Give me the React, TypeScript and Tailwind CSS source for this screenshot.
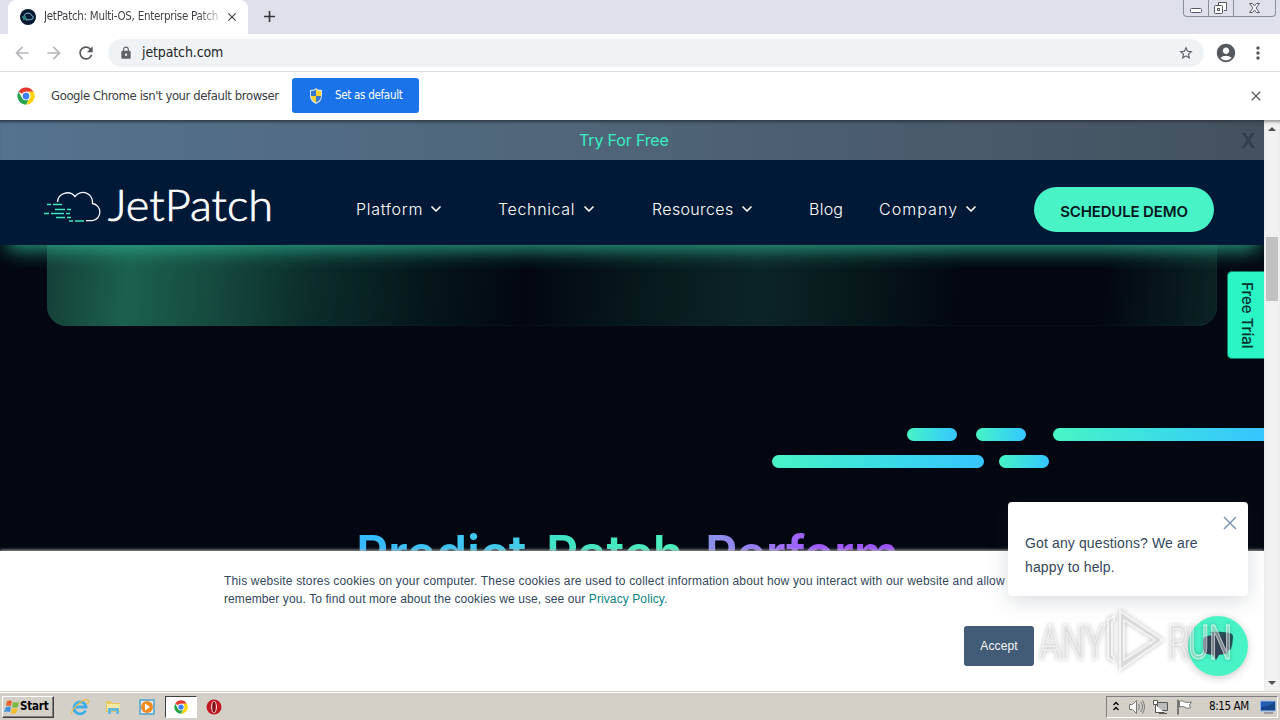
import {
  MdAccountCircle,
  MdAdd,
  MdArrowBack,
  MdArrowForward,
  MdClose,
  MdLock,
  MdMoreVert,
  MdRefresh,
  MdStarBorder,
} from "react-icons/md";
import { ChevronDown } from "lucide-react";

const ChromeLogo = ({ className }: { className?: string }) => (
  <svg viewBox="0 0 48 48" className={className}>
    <circle cx="24" cy="24" r="23" fill="#fff" />
    <path d="M24 1a23 23 0 0 1 19.900 11.500H24a11.500 11.500 0 0 0-10 5.800L4.100 12.500A23 23 0 0 1 24 1z" fill="#e33b2e" />
    <path d="M44 12.500A23 23 0 0 1 24 47l10-17.200a11.500 11.500 0 0 0 0-11.600l-3-5.700z" fill="#fcd209" />
    <path d="M4.100 12.500 14 29.800A11.500 11.500 0 0 0 24 35.500c3 0 5-1 7-2L24 47A23 23 0 0 1 4.100 12.500z" fill="#27a34b" />
    <circle cx="24" cy="24" r="11.500" fill="#fff" />
    <circle cx="24" cy="24" r="9" fill="#3d7ff0" />
  </svg>
);

function TabStrip() {
  return (
    <div className="flex h-[34px] shrink-0 justify-between bg-[#dee1e9]">
      <div className="flex">
        <div className="ml-2 flex h-[34px] w-60 items-center rounded-t-lg bg-white pl-3">
          <svg viewBox="0 0 16 16" className="size-4 shrink-0">
            <circle cx="8" cy="8" r="8" fill="#061b33" />
            <path d="M2 8h4M3 10h4" stroke="#45e0bd" />
            <path d="M4 7q1-3 4-3 3 0 3.500 2.500Q14 7 13 9.500 12 11 6 11" fill="none" stroke="#7fb6cc" />
          </svg>
          <div className="ml-2 w-[175px] whitespace-nowrap bg-linear-to-r from-[#3a3d42] from-88% to-[#3a3d4240] bg-clip-text font-['DejaVu_Sans_Condensed','DejaVu_Sans',sans-serif] text-[11.5px] tracking-[-0.280px] text-transparent">
            JetPatch: Multi-OS, Enterprise Patch
          </div>
          <MdClose className="ml-[6px] size-[14px] shrink-0 text-[#3c4043]" />
        </div>
        <MdAdd className="ml-3 mt-[7px] size-[19px] text-[#33363b]" />
      </div>
      <div className="mr-1 flex h-[17px] w-[93px] rounded-b-[4px] border border-t-0 border-[#8b8f98] text-[#555a66]">
        <svg viewBox="0 0 91 16" className="h-4 w-[91px]" fill="none" stroke="currentColor">
          <path d="M24.500 0v16M49.500 0v16" stroke="#8b8f98" />
          <rect x="6.500" y="8.500" width="11" height="4" rx="1" fill="#fff" />
          <path d="M34.500 5V2.500h8v8H40" fill="#fff" />
          <rect x="30.500" y="5.500" width="8" height="8" rx="1" fill="#fff" />
          <rect x="33.500" y="8.500" width="2" height="2" />
          <path d="M65.500 3.500h3l2 2.500 2-2.500h3L72 8l3.500 4.500h-3l-2-2.500-2 2.500h-3L69 8z" fill="#fff" />
        </svg>
      </div>
    </div>
  );
}

function Toolbar() {
  return (
    <div className="flex h-[38px] shrink-0 items-center border-b border-[#dcdde0] bg-white">
      <MdArrowBack className="ml-3 size-5 text-[#b4b6b9]" />
      <MdArrowForward className="ml-3 size-5 text-[#b4b6b9]" />
      <MdRefresh className="ml-3 size-5 text-[#55585c]" />
      <div className="ml-3 flex h-7 w-[1096px] items-center rounded-full bg-[#f0f3f6]">
        <MdLock className="ml-[11px] size-[14px] text-[#5f6368]" />
        <span className="ml-[9px] font-['DejaVu_Sans_Condensed','DejaVu_Sans',sans-serif] text-[14px] tracking-[-0.120px] text-[#222427]">
          jetpatch.com
        </span>
        <MdStarBorder className="ml-auto mr-[10px] size-4 text-[#55585c]" />
      </div>
      <MdAccountCircle className="ml-[11px] size-[22px] text-[#55585c]" />
      <MdMoreVert className="ml-[11px] size-5 text-[#55585c]" />
    </div>
  );
}

function DefaultBrowserBar() {
  return (
    <div className="flex h-12 shrink-0 items-center bg-white pb-px font-['DejaVu_Sans_Condensed','DejaVu_Sans',sans-serif]">
      <ChromeLogo className="ml-[17px] size-[18px]" />
      <span className="ml-4 w-[229px] whitespace-nowrap text-[13px] tracking-[-0.420px] text-[#3c4043]">
        Google Chrome isn't your default browser
      </span>
      <button className="ml-3 flex h-[35px] w-[127px] items-center rounded-[3px] bg-[#1a73e8] text-[11.5px] tracking-[-0.300px] text-white">
        <svg viewBox="0 0 16 16" className="ml-4 size-4">
          <path d="M8 0l2 1.500 4 .5v6q0 5-6 8-6-3-6-8V2l4-.5z" fill="#d9e3ee" />
          <path d="M8 1.500V8H3V3l3-.3z" fill="#3578cf" />
          <path d="M8 1.500V8h5V3l-3-.3z" fill="#f7d430" />
          <path d="M3 8h5v6.500Q3 12 3 8z" fill="#f7d430" />
          <path d="M13 8H8v6.500Q13 12 13 8z" fill="#3578cf" />
        </svg>
        <span className="ml-[11px] whitespace-nowrap">Set as default</span>
      </button>
      <MdClose className="ml-auto mr-4 size-4 text-[#606367]" />
    </div>
  );
}

const SiteLogo = () => (
  <svg viewBox="0 0 230 40" className="ml-[43px] mt-[25px] h-10 w-[230px] shrink-0 overflow-visible" fill="none">
    <path
      d="M14.500 17A9.800 9.500 0 0 1 32 11.500A9.700 9.700 0 0 1 49.500 18.500A8.700 8.700 0 0 1 49.500 35.700H43"
      stroke="#f2f6fb"
      strokeWidth="1.300"
    />
    <path
      d="M4 19.500h4m2 0h9M12 24.500h10m2 0h4M1 28.500h5m2 0h13m2 0h4M13 32.500h9m2 0h4m-2 3.500h4m2 0h9"
      stroke="#42e3bd"
      strokeWidth="1.300"
    />
    <text
      x="65"
      y="36"
      fill="#fff"
      stroke="#fff"
      strokeWidth="0.700"
      fontFamily="Lato, sans-serif"
      fontWeight="300"
      fontSize="43"
      textLength="165"
      lengthAdjust="spacingAndGlyphs"
    >
      JetPatch
    </text>
  </svg>
);

const links = [
  { label: "Platform", item: "ml-[82px] w-[88px]", text: "w-[68px] tracking-[0.700px]", menu: true },
  { label: "Technical", item: "ml-[54px] w-[99px]", text: "w-[78px] tracking-[0.650px]", menu: true },
  { label: "Resources", item: "ml-[55px] w-[102px]", text: "w-[82px] tracking-[0.350px]", menu: true },
  { label: "Blog", item: "ml-[55px] w-[35px]", text: "w-[35px] tracking-[0.250px]", menu: false },
  { label: "Company", item: "ml-[35px] w-[100px]", text: "w-[80px] tracking-[1.050px]", menu: true },
];

function SiteHeader() {
  return (
    <header className="font-[Inter,sans-serif]">
      <div className="flex h-10 items-center bg-linear-to-r from-[#54738f] via-[#4f6477] to-[#43515f] shadow-[inset_0_4px_3px_-2px_#303b45]">
        <span className="ml-[579px] w-[92px] whitespace-nowrap pb-px text-[16px] tracking-[-0.150px] text-[#37efc3]">
          Try For Free
        </span>
        <span className="ml-[570px] pt-[2px] text-[20px] font-semibold text-[#2d3d4e]">X</span>
      </div>
      <nav className="flex h-[85px] bg-[#001937]">
        <SiteLogo />
        <div className="ml-px flex">
          {links.map((link) => (
            <div key={link.label} className={`flex h-[98px] items-center text-white ${link.item}`}>
              <span className={`whitespace-nowrap text-[16px] font-light ${link.text}`}>{link.label}</span>
              {link.menu && <ChevronDown className="ml-[5px] size-4 shrink-0" strokeWidth={2.5} />}
            </div>
          ))}
        </div>
        <a className="ml-[55px] mt-[27px] flex h-[45px] w-[180px] items-center justify-center whitespace-nowrap rounded-full bg-[#48f4c6] pt-[5px] text-[15px] font-semibold tracking-[-0.150px] text-[#06161d]">
          SCHEDULE DEMO
        </a>
      </nav>
    </header>
  );
}

const bar = "h-[13px] bg-linear-to-r from-[#48f4c4] to-[#36c5ff]";

function Hero() {
  return (
    <section className="relative h-[306px] overflow-hidden bg-[#030711]">
      <div className="mx-[47px] h-[81px] rounded-b-[20px] bg-[linear-gradient(94deg,#153f38_0%,#1b614f_7%,#164b40_14%,#0b2c2a_23%,#051519_33%,#030710_41%,#07191c_51%,#0c2426_61%,#07181b_69%,#030710_78%,#030710_90%,#0b2324_100%)] shadow-[inset_0_0_1px_#2a5550]" />
      <div className="absolute -top-5 left-[10px] h-5 w-[1246px] shadow-[0_2px_20px_2px_#2ba88a]" />
      <div className="ml-[907px] mt-[102px] flex">
        <div className={`w-[50px] rounded-full ${bar}`} />
        <div className={`ml-[19px] w-[50px] rounded-full ${bar}`} />
        <div className={`ml-[27px] w-[211px] rounded-l-full ${bar}`} />
      </div>
      <div className="ml-[772px] mt-[14px] flex">
        <div className={`w-[212px] rounded-full ${bar}`} />
        <div className={`ml-[15px] w-[50px] rounded-full ${bar}`} />
      </div>
      <h1 className="ml-[356px] mt-[53px] flex whitespace-nowrap font-[Inter,sans-serif] text-[50px] font-semibold leading-[64px]">
        <span className="w-[190px] bg-linear-to-r from-[#36b9ff] to-[#43cfe5] bg-clip-text tracking-[-0.200px] text-transparent">Predict.</span>
        <span className="w-[159px] bg-linear-to-r from-[#3fe2c4] to-[#4df5bd] bg-clip-text text-transparent">Patch.</span>
        <span className="bg-linear-to-r from-[#8b93e8] via-[#a15cff] to-[#9b50f5] bg-clip-text tracking-[-0.400px] text-transparent">Perform.</span>
      </h1>
      <button className="absolute right-0 top-[26px] flex h-[88px] w-[37px] items-center justify-center rounded-l-[5px] border border-r-0 border-[#0f7d67] bg-[#2af5c4] pl-[2px]">
        <span className="whitespace-nowrap font-[Inter,sans-serif] text-[15px] font-medium text-[#06302e] [writing-mode:vertical-rl]">
          Free Trial
        </span>
      </button>
    </section>
  );
}

function CookieBanner() {
  return (
    <div className="relative h-[140px] bg-white pl-[224px] pt-[21px] font-['Liberation_Sans',Arial,sans-serif] text-[12px] leading-[18px] text-[#33475b] shadow-[0_-1px_3px_#aaa]">
      <p className="whitespace-nowrap">
        <span className="tracking-[0.165px]">
          This website stores cookies on your computer. These cookies are used to collect information about how you interact with our website and allow us to
        </span>
        <br />
        <span className="tracking-[0.095px]">
          remember you. To find out more about the cookies we use, see our{" "}
          <a className="text-[#0b8484]">Privacy Policy.</a>
        </span>
      </p>
      <button className="ml-[740px] mt-[18px] flex h-10 w-[70px] items-center justify-center rounded-[3px] bg-[#425b76] tracking-[0.100px] text-[#f5f8fa]">
        Accept
      </button>
    </div>
  );
}

function ChatWidget() {
  return (
    <div className="absolute right-4 top-[382px] w-60 font-['Liberation_Sans',Arial,sans-serif]">
      <div className="relative h-[94px] rounded-[4px] bg-white pl-[17px] pt-[29px] text-[14px] leading-6 tracking-[0.130px] text-[#33475b] shadow-[0_5px_20px_#33475b30]">
        Got any questions? We are
        <br />
        happy to help.
        <svg viewBox="0 0 14 14" className="absolute right-[11px] top-[14px] size-[14px]" stroke="#7c98b6" strokeWidth="1.500">
          <path d="M1 1l12 12M13 1L1 13" />
        </svg>
      </div>
      <div className="ml-[180px] mt-5 flex size-[60px] items-center justify-center rounded-full bg-[#48f4c6] shadow-[0_2px_8px_#00000035]">
        <svg viewBox="0 0 32 32" className="size-8">
          <path d="M8 2q10-1 20 1 3 1 3 4-.3 7-2 12-1 2-4 1z" fill="#24545c" />
          <path d="M5 6q9-2 18 0 3 1 3 4v10q0 4-4 4l-5 1-3 5-3-5-6-1q-4-1-4-5v-9q0-3 4-4z" fill="#33475b" />
        </svg>
      </div>
    </div>
  );
}

// Translucent outlined mark in the corner of the recording
const Watermark = () => (
  <svg
    viewBox="0 0 200 70"
    className="absolute right-[30px] top-[486px] h-[70px] w-[200px] drop-shadow-[0_0_2px_#00000060]"
    fill="#e8e8e870"
    stroke="#fff"
    strokeOpacity="0.7"
    fontFamily="Roboto, sans-serif"
    fontSize="49"
  >
    <text x="5" y="53" textLength="66" lengthAdjust="spacingAndGlyphs">ANY</text>
    <path d="M80 10l-6 4v38l6 4v-5l-2-2V16l2-1zM86 5l43 29-43 30V5zM90 14v40l31-20z" fillRule="evenodd" strokeWidth="2" strokeLinejoin="round" />
    <text x="134" y="53" textLength="64" lengthAdjust="spacingAndGlyphs">RUN</text>
  </svg>
);

function ScrollBar() {
  return (
    <div className="flex w-4 flex-col items-center bg-[#f1f1f1] shadow-[inset_0_4px_3px_-2px_#999]">
      <div className="mt-[7px] border-x-4 border-b-4 border-x-transparent border-b-[#505050]" />
      <div className="mt-[106px] h-16 w-3 bg-[#c1c1c1]" />
      <div className="mb-[6px] mt-auto border-x-4 border-t-4 border-x-transparent border-t-[#505050]" />
    </div>
  );
}

function Taskbar() {
  return (
    <div className="flex h-[29px] shrink-0 items-center border-t border-[#d4d0c8] bg-[#d4d0c8] pt-px font-['DejaVu_Sans_Condensed','DejaVu_Sans',sans-serif] text-black shadow-[inset_0_1px_#fff]">
      <button className="ml-[2px] flex h-[22px] w-[52px] items-center border border-b-[#404040] border-l-white border-r-[#404040] border-t-white text-[11.5px] font-bold tracking-[-0.200px] shadow-[inset_-1px_-1px_#808080]">
        <svg viewBox="0 0 16 16" className="ml-px size-4 shrink-0">
          <path d="M3 2q3-1 5 0L7 7Q4 6 2 7z" fill="#e9622a" />
          <path d="M9 3q3 1 6 0l-1 5q-3 1-6 0z" fill="#78b943" />
          <path d="M2 8q3-1 5 0l-1 5q-3-1-6 0z" fill="#3e91da" />
          <path d="M8 9q3 1 6 0l-2 5q-3 1-5 0z" fill="#f6bd25" />
        </svg>
        <span>Start</span>
      </button>
      <svg viewBox="0 0 18 18" className="ml-[17px] size-[18px]" fill="none">
        <path d="M14.500 12.500A6 6 0 1 1 15 9H5" stroke="#3faee8" strokeWidth="2.800" />
        <path d="M1 16C-1 12 12 0 17 2c1 1 0 3-1 4" stroke="#eab94b" strokeWidth="1.200" />
      </svg>
      <svg viewBox="0 0 18 18" className="ml-[15px] size-[18px]">
        <path d="M2 3h5l1 2h8v9H2z" fill="#e9c75f" />
        <path d="M3 6h13v6H3z" fill="#f9e9a4" />
        <path d="M4 10h11v6h-3v-3H7v3H4z" fill="#65b8dd" />
      </svg>
      <svg viewBox="0 0 18 18" className="ml-4 size-[18px]">
        <rect x="1" y="1" width="16" height="16" fill="#6faed5" />
        <rect x="3" y="3" width="12" height="12" fill="#e9f0f4" />
        <circle cx="9" cy="9" r="6" fill="#f08a1d" />
        <path d="M7 5.500l5 3.500-5 3.500z" fill="#fff" />
      </svg>
      <div className="ml-[9px] flex h-[22px] w-8 items-center justify-center border border-b-white border-l-[#404040] border-r-white border-t-[#404040] bg-white">
        <ChromeLogo className="size-[14px]" />
      </div>
      <svg viewBox="0 0 16 16" className="ml-[9px] size-4">
        <circle cx="8" cy="8" r="7.500" fill="#c11720" />
        <ellipse cx="8" cy="8" rx="3" ry="6" fill="#f2dada" />
        <ellipse cx="8" cy="8" rx="1.800" ry="5.300" fill="#850c14" />
      </svg>
      <div className="ml-auto mr-[2px] flex h-[22px] w-[172px] items-center border border-b-white border-l-[#808080] border-r-white border-t-[#808080] text-[11.5px]">
        <svg viewBox="0 0 8 12" className="ml-[5px] h-3 w-2" fill="none" stroke="#000" strokeWidth="1.300">
          <path d="M1.500 4L4 1.500 6.500 4M1.500 9L4 6.500 6.500 9" />
        </svg>
        <svg viewBox="0 0 18 16" className="ml-2 h-4 w-[18px]" fill="none" stroke="#777">
          <path d="M1.500 5.500h3l4-4v13l-4-4h-3z" fill="#fff" />
          <path d="M10.500 5q2 3 0 6M12.500 3q4 5 0 10M14.500 1.500q4 6.500 0 13" />
        </svg>
        <svg viewBox="0 0 17 16" className="ml-[6px] h-4 w-[17px]" fill="#fff" stroke="#555">
          <path d="M5.500 3.500h10v8h-10z" fill="#bbb" />
          <path d="M1.500 1.500h4v4h-4zM3.500 6v7.500h9M7 14.500h8" />
        </svg>
        <svg viewBox="0 0 17 16" className="ml-[7px] h-4 w-[17px]" fill="#fff" stroke="#777">
          <path d="M1.500 1v14.500h1V1zM3.500 2q3-1 5 1 3 1 7 0l-2 3 1 3q-4 1-6-1-2-1-5 0z" />
        </svg>
        <span className="ml-4 w-[42px] whitespace-nowrap tracking-[-0.400px]">8:15 AM</span>
        <svg viewBox="0 0 16 14" className="ml-[9px] h-[14px] w-4">
          <rect x=".5" y="1" width="15" height="10" fill="#245bb2" stroke="#91b9e6" />
          <path d="M1 7q7 0 14-5v8H1z" fill="#174489" />
          <path d="M4 13h9" stroke="#667" />
        </svg>
      </div>
    </div>
  );
}

export default function App() {
  return (
    <div className="flex h-[720px] w-[1280px] flex-col overflow-hidden bg-white">
      <TabStrip />
      <Toolbar />
      <DefaultBrowserBar />
      <div className="flex h-[571px] shrink-0">
        <main className="relative w-[1264px] overflow-hidden">
          <SiteHeader />
          <Hero />
          <CookieBanner />
          <ChatWidget />
          <Watermark />
        </main>
        <ScrollBar />
      </div>
      <Taskbar />
    </div>
  );
}
